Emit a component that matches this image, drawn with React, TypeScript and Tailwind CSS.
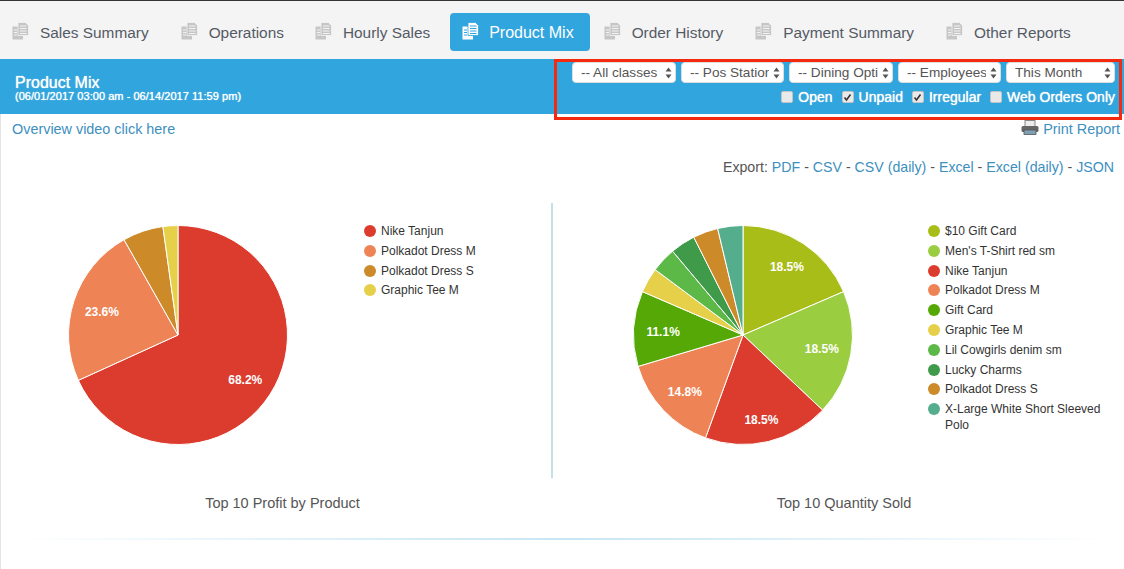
import React from 'react';

const RED = '#dc3c2e';
const ORANGE = '#ee8455';
const BROWN = '#cc8a29';
const YELLOW = '#e6d04a';

interface Slice {
  name: string;
  pct: number;
  color: string;
  dy?: number;
}

const profit: Slice[] = [
  { name: 'Nike Tanjun', pct: 68.2, color: RED, dy: 2 },
  { name: 'Polkadot Dress M', pct: 23.6, color: ORANGE, dy: 2 },
  { name: 'Polkadot Dress S', pct: 6, color: BROWN },
  { name: 'Graphic Tee M', pct: 2.2, color: YELLOW },
];

const quantity: Slice[] = [
  { name: '$10 Gift Card', pct: 18.52, color: '#a9bd19', dy: -1 },
  { name: "Men's T-Shirt red sm", pct: 18.52, color: '#9acd3f' },
  { name: 'Nike Tanjun', pct: 18.52, color: RED, dy: 7 },
  { name: 'Polkadot Dress M', pct: 14.81, color: ORANGE, dy: 2 },
  { name: 'Gift Card', pct: 11.11, color: '#55a805', dy: 2 },
  { name: 'Graphic Tee M', pct: 3.7, color: YELLOW },
  { name: 'Lil Cowgirls denim sm', pct: 3.7, color: '#5cb947' },
  { name: 'Lucky Charms', pct: 3.7, color: '#3f9a4a' },
  { name: 'Polkadot Dress S', pct: 3.7, color: BROWN },
  { name: 'X-Large White Short Sleeved Polo', pct: 3.72, color: '#54ad8c' },
];

const tabs = [
  { label: 'Sales Summary', gap: 'mr-[8px]' },
  { label: 'Operations', gap: 'mr-[7px]' },
  { label: 'Hourly Sales', gap: 'mr-[8px]' },
  { label: 'Product Mix', gap: 'mr-[2px]' },
  { label: 'Order History', gap: 'mr-[8px]' },
  { label: 'Payment Summary', gap: 'mr-[8px]' },
  { label: 'Other Reports', gap: 'mr-0' },
];

function DocsIcon({ active }: { active: boolean }) {
  const cut = active ? '#31a5de' : '#f4f4f4';
  return (
    <svg width="17" height="18" viewBox="0 0 17 18" className={`mb-[3px] shrink-0 ${active ? 'text-white' : 'text-[#c6c6c6]'}`}>
      <path d="M0.5 4.5h6v9h4.5v4H0.5z" fill="currentColor" />
      <path d="M2 8h3M2 10.5h3M2 13h3" stroke={cut} strokeWidth="1" />
      <path d="M6 0.5h7.5l3 3V13.5H6z" fill="currentColor" stroke={cut} strokeWidth="0.8" />
      <path d="M8 4h6.5M8 6.5h6.5M8 9h6.5M8 11.5h6.5" stroke={cut} strokeWidth="1" />
    </svg>
  );
}

function PrinterIcon() {
  return (
    <svg width="18" height="16" viewBox="0 0 18 16" className="mb-[3px]">
      <rect x="4" y="0.5" width="10" height="6" fill="#ececec" stroke="#888" />
      <rect x="0.5" y="6" width="17" height="6" rx="1.5" fill="#666" />
      <rect x="3" y="10" width="12" height="4.5" fill="#7f9fb2" stroke="#555" strokeWidth="0.8" />
    </svg>
  );
}

function Pie({ data }: { data: Slice[] }) {
  const R = 109.5;
  const c = 110;
  let acc = 0;
  return (
    <svg width="220" height="220" viewBox="0 0 220 220" className="shrink-0">
      {data.map(s => {
        const a0 = (acc / 100) * Math.PI * 2;
        acc += s.pct;
        const a1 = (acc / 100) * Math.PI * 2;
        const mid = (a0 + a1) / 2;
        const large = a1 - a0 > Math.PI ? 1 : 0;
        const d = `M${c} ${c}L${c + R * Math.sin(a0)} ${c - R * Math.cos(a0)}A${R} ${R} 0 ${large} 1 ${c + R * Math.sin(a1)} ${c - R * Math.cos(a1)}Z`;
        return (
          <g key={s.name}>
            <path d={d} fill={s.color} stroke="#fff" strokeWidth="1" />
            {s.pct > 10 && (
              <text
                x={c + 80 * Math.sin(mid)}
                y={c - 80 * Math.cos(mid) + 4 + (s.dy ?? 0)}
                textAnchor="middle"
                fill="#fff"
                fontSize="12"
                fontWeight="700"
              >
                {s.pct.toFixed(1)}%
              </text>
            )}
          </g>
        );
      })}
    </svg>
  );
}

function Legend({ data }: { data: Slice[] }) {
  return (
    <ul className="-mt-[2px] flex flex-col text-xs text-[#333]">
      {data.map(s => (
        <li key={s.name} className="flex items-start gap-[5px] leading-[16px] pb-[3.8px]">
          <span className="mt-[2px] size-[12px] shrink-0 rounded-full" style={{ backgroundColor: s.color }} />
          <span>{s.name}</span>
        </li>
      ))}
    </ul>
  );
}

function Filter({ label, width }: { label: string; width: string }) {
  return (
    <div className={`relative ${width}`}>
      <select
        defaultValue={label}
        className="block h-[21px] w-full appearance-none rounded-[4px] border border-[#ddd] bg-white pl-[8px] pr-[14px] text-[13.6px] leading-[19px] text-[#555] outline-none"
      >
        <option>{label}</option>
      </select>
      <svg width="7" height="12" viewBox="0 0 7 12" className="pointer-events-none absolute right-[4px] top-[5px]">
        <path d="M3.5 0.5L6.5 4.5H0.5zM3.5 11.5L0.5 7.5H6.5z" fill="#555" />
      </svg>
    </div>
  );
}

function Check({ label, checked }: { label: string; checked?: boolean }) {
  return (
    <label className="flex items-center gap-[5px]">
      <span className="flex size-[12px] items-center justify-center rounded-[2px] border border-[#c4c4c4] bg-[#e9e9e9]">
        {checked && (
          <svg width="9" height="9" viewBox="0 0 9 9">
            <path d="M1.5 4.5L3.5 7L7.5 1.5" fill="none" stroke="#333" strokeWidth="1.6" />
          </svg>
        )}
      </span>
      <span>{label}</span>
    </label>
  );
}

export default function App() {
  return (
    <div className="relative h-[569px] overflow-hidden bg-white font-['Liberation_Sans',Arial,sans-serif] text-[14.3px] text-[#555]">
      <div className="h-px bg-[#333]" />

      <nav className="flex h-[58px] items-start bg-[#f4f4f4] pt-[12px]">
        {tabs.map(t => {
          const active = t.label === 'Product Mix';
          return (
            <a
              key={t.label}
              className={`flex h-[38px] items-center rounded-[4px] pt-[1px] ${t.gap} ${active ? 'gap-[10px] bg-[#31a5de] pl-[12px] pr-[16px] text-base text-white' : 'gap-[11px] px-[12px] text-[15.4px] text-[#555b66]'}`}
            >
              <DocsIcon active={active} />
              {t.label}
            </a>
          );
        })}
      </nav>

      <header className="flex h-[55px] justify-between bg-[#31a5de] pl-[15px] pr-[9px] text-white [text-shadow:0_0_1px_#fff]">
        <div className="pt-[16px]">
          <h1 className="text-base leading-[16px]">Product Mix</h1>
          <p className="text-[11.1px] leading-[10px]">(06/01/2017 03:00 am - 06/14/2017 11:59 pm)</p>
        </div>
        <div className="flex flex-col items-end gap-[4px] pt-[3px]">
          <div className="flex gap-[5px] [text-shadow:none]">
            <Filter label="-- All classes" width="w-[104px]" />
            <Filter label="-- Pos Station" width="w-[103px]" />
            <Filter label="-- Dining Options" width="w-[104px]" />
            <Filter label="-- Employees" width="w-[103px]" />
            <Filter label="This Month" width="w-[109px]" />
          </div>
          <div className="flex gap-[9px] text-sm leading-[20px]">
            <Check label="Open" />
            <Check label="Unpaid" checked />
            <Check label="Irregular" checked />
            <Check label="Web Orders Only" />
          </div>
        </div>
      </header>

      {/* annotation drawn over the screenshot */}
      <div className="pointer-events-none absolute left-[554px] top-[59px] h-[61px] w-[568px] border-[3px] border-[#f5290f]" />

      <main className="h-[455px] border-l border-[#e4e4e4]">
        <div className="flex h-[30px] items-center justify-between pl-[11px] pr-[4px] pt-[1px] text-[14.4px] text-[#3d8fc0]">
          <a>Overview video click here</a>
          <a className="flex items-center gap-[4px]">
            <PrinterIcon />
            Print Report
          </a>
        </div>

        <p className="pr-[10px] pt-[13px] text-right text-[14.2px] leading-[20px]">
          Export: <a className="text-[#3d8fc0]">PDF</a> - <a className="text-[#3d8fc0]">CSV</a> -{' '}
          <a className="text-[#3d8fc0]">CSV (daily)</a> - <a className="text-[#3d8fc0]">Excel</a> -{' '}
          <a className="text-[#3d8fc0]">Excel (daily)</a> - <a className="text-[#3d8fc0]">JSON</a>
        </p>

        <div className="mt-[26px] flex h-[275px]">
          <section className="flex w-[552px] items-start gap-[76px] border-r-2 border-[#c2e0e6] pl-[67px] pt-[22px]">
            <Pie data={profit} />
            <Legend data={profit} />
          </section>
          <section className="flex flex-1 items-start gap-[75px] pl-[80px] pt-[22px]">
            <Pie data={quantity} />
            <div className="w-[182px]">
              <Legend data={quantity} />
            </div>
          </section>
        </div>

        <div className="mt-[15px] grid grid-cols-[563px_560px] text-center text-[14.5px] leading-[20px]">
          <h2>Top 10 Profit by Product</h2>
          <h2>Top 10 Quantity Sold</h2>
        </div>

        <div className="mx-[10px] mt-[25px] h-[2px] bg-linear-to-r from-transparent via-[#c6e6f4] to-transparent" />
      </main>
    </div>
  );
}
